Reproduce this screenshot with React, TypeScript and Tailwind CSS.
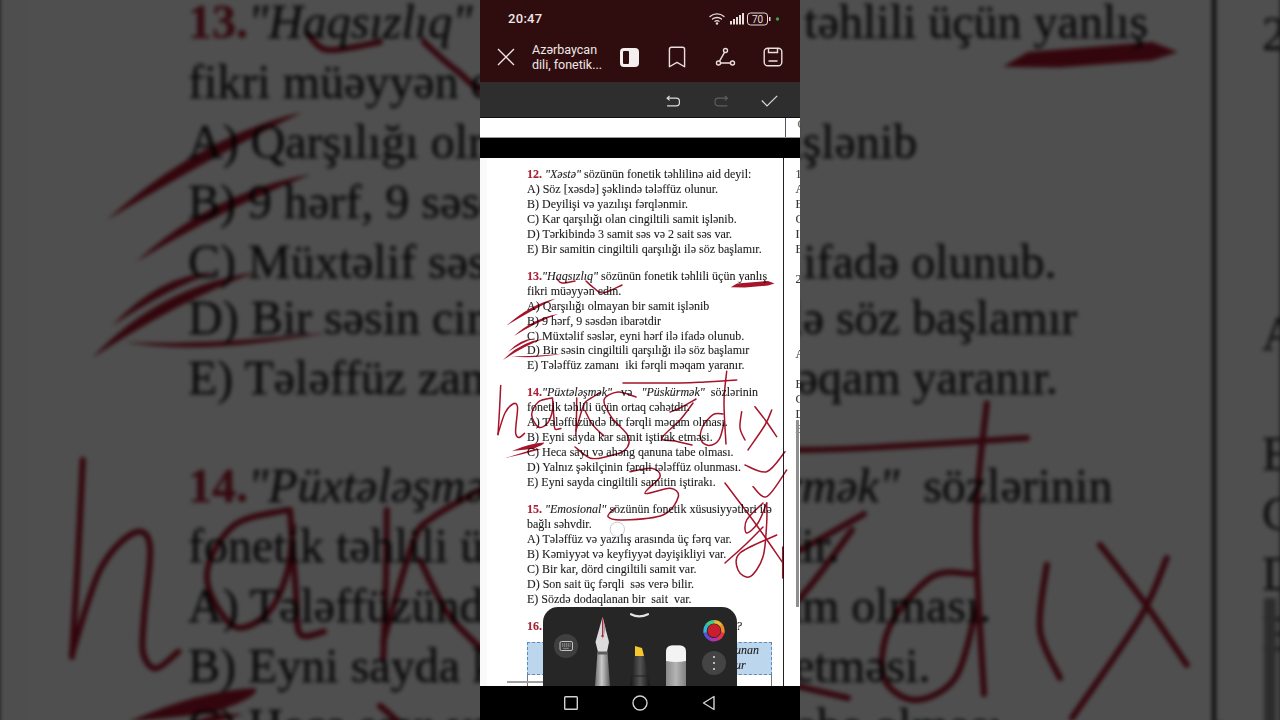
import { Bookmark } from "lucide-react";

type Pt = [number, number];

type Question = {
  num: string;
  head: string;
  mid?: string;
  head2?: string;
  rest: string;
  lines: string[];
};

const questions: Question[] = [
  {
    num: "12.",
    head: ' "Xəstə"',
    rest: " sözünün fonetik təhlilinə aid deyil:",
    lines: [
      "A) Söz [xəsdə] şəklində tələffüz olunur.",
      "B) Deyilişi və yazılışı fərqlənmir.",
      "C) Kar qarşılığı olan cingiltili samit işlənib.",
      "D) Tərkibində 3 samit səs və 2 sait səs var.",
      "E) Bir samitin cingiltili qarşılığı ilə söz başlamır.",
    ],
  },
  {
    num: "13.",
    head: '"Haqsızlıq"',
    rest: " sözünün fonetik təhlili üçün yanlış",
    lines: [
      "fikri müəyyən edin.",
      "A) Qarşılığı olmayan bir samit işlənib",
      "B) 9 hərf, 9 səsdən ibarətdir",
      "C) Müxtəlif səslər, eyni hərf ilə ifadə olunub.",
      "D) Bir səsin cingiltili qarşılığı ilə söz başlamır",
      "E) Tələffüz zamanı  iki fərqli məqam yaranır.",
    ],
  },
  {
    num: "14.",
    head: '"Püxtələşmək"',
    mid: "   və   ",
    head2: '"Püskürmək"',
    rest: "  sözlərinin",
    lines: [
      "fonetik təhlili üçün ortaq cəhətdir.",
      "A) Tələffüzündə bir fərqli məqam olması.",
      "B) Eyni sayda kar samit iştirak etməsi.",
      "C) Heca sayı və ahəng qanuna tabe olması.",
      "D) Yalnız şəkilçinin fərqli tələffüz olunması.",
      "E) Eyni sayda cingiltili samitin iştirakı.",
    ],
  },
  {
    num: "15.",
    head: ' "Emosional"',
    rest: " sözünün fonetik xüsusiyyətləri ilə",
    lines: [
      "bağlı səhvdir.",
      "A) Tələffüz və yazılış arasında üç fərq var.",
      "B) Kəmiyyət və keyfiyyət dəyişikliyi var.",
      "C) Bir kar, dörd cingiltili samit var.",
      "D) Son sait üç fərqli  səs verə bilir.",
      "E) Sözdə dodaqlanan bir  sait  var.",
    ],
  },
];

// second page column, only its first letters show
const nextColumn = ["1", "A", "E", "C", "I", "E", "", "2", "", "", "", "", "A", "", "E", "C", "D", "E"];

// catmull-rom through the points, good enough for handwriting
function smooth(pts: Pt[]) {
  let d = `M${pts[0][0]} ${pts[0][1]}`;
  for (let i = 0; i < pts.length - 1; i++) {
    const p0 = pts[i - 1] ?? pts[i];
    const p1 = pts[i];
    const p2 = pts[i + 1];
    const p3 = pts[i + 2] ?? p2;
    const c1x = p1[0] + (p2[0] - p0[0]) / 6;
    const c1y = p1[1] + (p2[1] - p0[1]) / 6;
    const c2x = p2[0] - (p3[0] - p1[0]) / 6;
    const c2y = p2[1] - (p3[1] - p1[1]) / 6;
    d += ` C${c1x} ${c1y} ${c2x} ${c2y} ${p2[0]} ${p2[1]}`;
  }
  return d;
}

const strokes: Pt[][] = [
  // underline + tick on line 13
  [[557, 279], [562, 283], [575, 281]],
  [[586, 281], [594, 288], [603, 293], [622, 285]],
  // h
  [[500.7, 385.5], [499.5, 410], [498, 434.7]],
  [[498, 434], [505, 413], [513.3, 403.8], [517.5, 407], [516, 425], [515.8, 433.8], [519, 437.6], [524.6, 433.4]],
  // a
  [[551.7, 398], [538.3, 402], [531.7, 414.7], [538.3, 427], [546.7, 424], [551.7, 414], [553.3, 402]],
  [[552.5, 398], [554, 419], [555, 429], [561, 428.4]],
  // k
  [[576.7, 398], [576.5, 415], [575.8, 435.5]],
  [[575.8, 431], [583.3, 406], [588, 400], [600, 393]],
  [[585, 410.5], [592.5, 424.6], [604, 436]],
  // s
  [[636, 397], [618, 392], [604, 400], [612, 418], [628, 436], [625, 450], [605, 457], [590, 458], [575, 447]],
  // top bar
  [[623, 383], [680, 383], [705, 382], [736.7, 380]],
  // z
  [[670, 412], [680, 408], [696, 399]],
  [[693, 403], [680, 420], [662, 438], [675, 441], [692, 445]],
  // d
  [[726.7, 371.3], [724, 402], [726, 444]],
  [[723, 414], [713, 414.7], [702.5, 427], [701, 440], [709, 445.5], [719, 439.7], [724, 423]],
  // i
  [[741.7, 411.7], [740, 428], [745, 440]],
  // x
  [[755, 406.7], [766, 421], [776.7, 436.7]],
  [[771.7, 410], [765, 425], [748, 450]],
  // 3
  [[630, 471.7], [651.7, 468.3], [660, 476.7], [645, 493.3], [670, 488.3], [678.3, 496.7], [663, 515], [623, 520], [608, 516.7], [615, 508]],
  // scribble bottom right
  [[745, 465], [766.7, 471.7], [785, 451.7]],
  [[786.7, 470], [766.7, 496.7], [753, 486.7]],
  [[725, 483], [755, 523], [783, 563]],
  [[763, 503], [746.7, 520], [746.7, 533], [758, 523], [766.7, 503]],
  [[766.7, 503], [766.7, 523], [763, 556.7], [750, 576.7], [738, 570], [740, 553], [776.7, 535]],
  [[725, 563], [745, 545], [763, 527]],
  [[782.7, 547], [782.7, 578]],
];

function Ink() {
  return (
    <svg className="absolute left-[-7px] top-0 h-[528px] w-[320px] mix-blend-multiply" viewBox="480 158 320 528" fill="none">
      <g stroke="#a5142a" strokeWidth="1.5" strokeLinecap="round" strokeLinejoin="round">
        {strokes.map((s, i) => (
          <path key={i} d={smooth(s)} />
        ))}
      </g>
      <g fill="#a5142a">
        <path d="M730.7 287.2 L737 283.5 L768 281 L774.5 283.5 L768 285.6 L745 287.4 Z" />
        <path d="M506.7 325.5 Q530 304.5 555.7 298.5 Q533 309.5 506.7 325.5 Z" />
        <path d="M514 336 Q533 318.5 558 314 Q535 323 514 336 Z" />
        <path d="M508 352 Q520 339 534 338.5 Q522 342.5 508 352 Z" />
        <path d="M503 360 Q520 342 544 338.5 Q524 346 503 360 Z" />
        <path d="M511 356 Q530 359.5 563 353.5 Q530 357 511 356 Z" />
        <path d="M505 458 L536 448.5 L512 451 Q530 443 544 442.5 Q545 445 532 449 L541 449 Q525 454 505 458 Z" />
      </g>
      <circle cx="617.3" cy="529.3" r="7.2" stroke="#c3ccd4" strokeWidth="1" />
    </svg>
  );
}

function Sheet() {
  return (
    <div className="relative flex h-[528px] w-[320px] overflow-hidden border-l-[7px] border-[#fafafa] bg-white font-['Liberation_Serif',serif] text-[12px] leading-[14.95px] text-[#1c1c1c] [-webkit-text-stroke:0.1px]">
      <div className="w-[297px] shrink-0 border-r-[1.5px] border-[#222] pl-[40px] pt-[9px]">
        {questions.map((q) => (
          <div key={q.num} className="mb-[12px] whitespace-pre">
            <div>
              <b className="text-[#a92335]">{q.num}</b>
              <span className="italic">{q.head}</span>
              {q.mid}
              {q.head2 && <span className="italic">{q.head2}</span>}
              {q.rest}
            </div>
            {q.lines.map((l) => (
              <div key={l}>{l}</div>
            ))}
          </div>
        ))}
        <div className="flex w-[245px] justify-between whitespace-pre pr-[30px]">
          <b className="text-[#a92335]">16.</b>
          <span className="italic">?</span>
        </div>
        <div className="mt-[8px] flex h-[33px] w-[245px] flex-col items-end justify-center border border-dashed border-[#5c8cba] bg-[#bcd6ee] pr-[10px] italic">
          <span className="w-[26px]">unan</span>
          <span className="w-[26px]">ur</span>
        </div>
        <div className="h-[12px] w-[245px] border-x border-[#777]" />
      </div>
      <div className="overflow-hidden whitespace-pre pl-[11.5px] pt-[9px] text-[#333]">
        {nextColumn.map((c, i) => (
          <div key={i} className="h-[15px]">
            {c}
          </div>
        ))}
      </div>
      <div className="absolute left-[309px] top-[262px] h-[187px] w-[3px] bg-[#8f8f8f]" />
      <div className="absolute left-[20px] top-[523px] h-[1.5px] w-[36px] bg-[#a0a0a0]" />
      <Ink />
    </div>
  );
}

function StatusIcons() {
  return (
    <svg width="76" height="14" viewBox="0 0 76 14" fill="none">
      <g stroke="#e6dcdc" strokeWidth="1.3" strokeLinecap="round">
        <path d="M1 4.5C5 1 11 1 15 4.5" />
        <path d="M3.5 7C6 5 10 5 12.5 7" />
        <path d="M6 9.3C7.2 8.4 8.8 8.4 10 9.3" />
      </g>
      <circle cx="8" cy="11.5" r="1.2" fill="#e6dcdc" />
      <g fill="#e6dcdc">
        <rect x="21" y="9" width="2" height="3.5" />
        <rect x="24" y="7" width="2" height="5.5" />
        <rect x="27" y="5" width="2" height="7.5" />
        <rect x="30" y="3" width="2" height="9.5" />
        <rect x="33" y="1" width="2" height="11.5" />
      </g>
      <rect x="38.5" y="1" width="20" height="12" rx="3" stroke="#e6dcdc" strokeWidth="1" />
      <rect x="60" y="5" width="1.5" height="4" fill="#e6dcdc" />
      <text x="48.5" y="10.6" textAnchor="middle" fontSize="10" fontFamily="Roboto, sans-serif" fill="#e6dcdc">
        70
      </text>
      <circle cx="68.5" cy="7" r="1.7" fill="#2fa84f" />
    </svg>
  );
}

function HeaderIcons() {
  return (
    <div className="ml-auto flex pr-[3px] text-[#eadede]">
      <div className="flex w-12 items-center justify-center">
        <div className="flex h-[19px] w-[19px] rounded-[4px] bg-[#f4eeee] p-[3px]">
          <div className="w-[6px] rounded-[1px] bg-[#2f0d0e]" />
        </div>
      </div>
      <div className="flex w-12 items-center justify-center">
        <Bookmark className="h-[26px] w-[26px]" strokeWidth={1.3} />
      </div>
      <div className="flex w-12 items-center justify-center">
        <svg width="22" height="22" viewBox="0 0 22 22" fill="none" stroke="currentColor" strokeWidth="1.4">
          <circle cx="11.5" cy="4.5" r="2" />
          <circle cx="4.5" cy="17" r="2" />
          <circle cx="18.5" cy="17" r="2" />
          <path d="M10.5 6.3L5.5 15.2M6.5 17H16.5" />
        </svg>
      </div>
      <div className="flex w-12 items-center justify-center">
        <svg width="20" height="20" viewBox="0 0 20 20" fill="none" stroke="currentColor" strokeWidth="1.4">
          <rect x="1.2" y="1.2" width="17.6" height="17.6" rx="3.5" />
          <path d="M5.5 1.5V5.5H14.5V1.5M5.5 14H14.5" />
        </svg>
      </div>
    </div>
  );
}

function UndoIcon({ flip }: { flip?: boolean }) {
  return (
    <svg width="14.5" height="12" viewBox="0 0 16 13" fill="none" stroke="currentColor" strokeWidth="1.3" className={flip ? "-scale-x-100" : ""}>
      <path d="M4 0.8L1.2 3.4L4 5.8M1.4 3.4H11.5C16 3.4 16 11.8 11.5 11.8H1.2" />
    </svg>
  );
}

function PenTray() {
  const ring = ["#e8b92f", "#f08a2c", "#e0344f", "#b62fb0", "#5a4fd8", "#2fb7d8", "#3fc98c"];
  return (
    <div className="absolute bottom-0 left-[63px] h-[79px] w-[194px] overflow-hidden rounded-t-[15px] bg-[#262626]">
      <svg width="194" height="79" viewBox="543 607 194 79" fill="none">
        <defs>
          <linearGradient id="steel" x1="0" x2="1" y1="0" y2="0">
            <stop offset="0" stopColor="#6f6f6f" />
            <stop offset="0.45" stopColor="#c9c9c9" />
            <stop offset="1" stopColor="#5c5c5c" />
          </linearGradient>
          <linearGradient id="black" x1="0" x2="1" y1="0" y2="0">
            <stop offset="0" stopColor="#161616" />
            <stop offset="0.5" stopColor="#555" />
            <stop offset="1" stopColor="#151515" />
          </linearGradient>
          <linearGradient id="eraser" x1="0" x2="1" y1="0" y2="0">
            <stop offset="0" stopColor="#8a8a8a" />
            <stop offset="0.5" stopColor="#b5b5b5" />
            <stop offset="1" stopColor="#808080" />
          </linearGradient>
        </defs>
        <path d="M631 614.2Q639 618.5 648 614.2" stroke="#e4e4e4" strokeWidth="2.2" strokeLinecap="round" />
        {/* keyboard */}
        <circle cx="566" cy="646" r="12" fill="#3f3f3f" />
        <rect x="560" y="641.5" width="12.5" height="9" rx="1.5" stroke="#c4c4c4" strokeWidth="1" />
        <path d="M562 644H570.5M562 646H570.5M563.5 648.4H569" stroke="#c4c4c4" strokeWidth="0.9" strokeDasharray="1.2 0.7" />
        {/* pen */}
        <path d="M602.5 617L609 642L607 652H598L595.5 642Z" fill="#dcdcdc" />
        <path d="M602.5 617L605.5 630L602.5 640Z" fill="#a8a8a8" />
        <path d="M602.5 618V636" stroke="#c41f3a" strokeWidth="1" />
        <path d="M602.5 618L605 628" stroke="#c98a90" strokeWidth="0.8" />
        <circle cx="602.5" cy="636" r="1.2" fill="#c41f3a" />
        <path d="M597.5 652H607.5L610 686H595Z" fill="url(#steel)" />
        <rect x="597.5" y="651.5" width="10" height="3" fill="#5d5d5d" />
        {/* highlighter */}
        <path d="M635 646L642 648L644 656H635Z" fill="#f5c92e" />
        <path d="M634.5 656H644L650 686H630Z" fill="url(#black)" />
        <path d="M630.5 676H649" stroke="#222" strokeWidth="1" />
        {/* eraser */}
        <path d="M666 652Q666 645.5 672 645.5H680Q686 645.5 686 652V686H666Z" fill="url(#eraser)" />
        <path d="M666 661V652Q666 645.5 672 645.5H680Q686 645.5 686 652V661Q676 663 666 661Z" fill="#f3f3f3" />
        {/* colour ring */}
        {ring.map((c, i) => (
          <circle
            key={c}
            cx="714"
            cy="630.7"
            r="9"
            stroke={c}
            strokeWidth="3.4"
            pathLength={70}
            strokeDasharray="10.5 59.5"
            strokeDashoffset={-i * 10}
            transform="rotate(-90 714 630.7)"
          />
        ))}
        <circle cx="714" cy="630.7" r="6.6" fill="#c81e2e" />
        {/* more */}
        <circle cx="714" cy="663" r="12" fill="#444" />
        <g fill="#d8d8d8">
          <circle cx="714" cy="657" r="1.1" />
          <circle cx="714" cy="663" r="1.1" />
          <circle cx="714" cy="669" r="1.1" />
        </g>
      </svg>
    </div>
  );
}

export default function App() {
  return (
    <div className="relative flex h-[720px] w-[1280px] justify-center overflow-hidden bg-[#505050] font-['Roboto',sans-serif]">
      {/* blurred, darkened copy of the page behind the phone */}
      <div className="absolute inset-0 overflow-hidden">
        <div className="absolute left-0 top-[-450px] origin-top-left scale-[4] blur-[0.55px]">
          <Sheet />
        </div>
        <div className="absolute inset-0 bg-black/[0.69]" />
      </div>

      <div className="relative flex h-[720px] w-[320px] flex-col bg-black">
        <div className="h-[82px] bg-[#2f0d0e] text-[#efe6e6]">
          <div className="flex h-[38px] items-center justify-between pl-[28px] pr-[15px]">
            <span className="text-[13px] font-medium tracking-[0.3px]">20:47</span>
            <StatusIcons />
          </div>
          <div className="flex h-[38px] items-center">
            <div className="flex w-[52px] items-center justify-center">
              <svg width="18" height="18" viewBox="0 0 18 18" stroke="currentColor" strokeWidth="1.3">
                <path d="M1 1L17 17M17 1L1 17" />
              </svg>
            </div>
            <div className="text-[12.5px] leading-[15px]">
              Azərbaycan
              <br />
              dili, fonetik...
            </div>
            <HeaderIcons />
          </div>
        </div>

        <div className="flex h-[35px] items-center justify-end bg-[#2e2e2e] pr-[7px] pt-[3px] text-[#dcdcdc]">
          <div className="flex w-12 justify-center">
            <UndoIcon />
          </div>
          <div className="flex w-12 justify-center text-[#5f5f5f]">
            <UndoIcon flip />
          </div>
          <div className="flex w-12 justify-center">
            <svg width="17" height="12" viewBox="0 0 17 12" fill="none" stroke="currentColor" strokeWidth="1.2">
              <path d="M0.8 5.5L6 11L16.2 0.8" />
            </svg>
          </div>
        </div>

        <div className="flex h-[21px] border-b border-t border-b-[#999] border-t-[#111] bg-white">
          <div className="w-[305.5px] shrink-0 border-r-[1.5px] border-[#555]" />
          <span className="overflow-hidden pl-[12px] font-['Liberation_Serif',serif] text-[12px] leading-[13px] text-[#555]">C</span>
        </div>
        <div className="h-[20px] bg-black" />

        <div className="relative h-[528px] overflow-hidden blur-[0.25px]">
          <Sheet />
          <PenTray />
        </div>

        <div className="flex h-[34px] items-center justify-center gap-[53px] bg-black">
          <svg width="16" height="16" viewBox="0 0 16 16" fill="none" stroke="#d2d2d2" strokeWidth="1.4">
            <rect x="1.7" y="1.7" width="12.6" height="12.6" rx="0.8" />
          </svg>
          <svg width="16" height="16" viewBox="0 0 16 16" fill="none" stroke="#d2d2d2" strokeWidth="1.4">
            <circle cx="8" cy="8" r="7" />
          </svg>
          <svg width="16" height="16" viewBox="0 0 16 16" fill="none" stroke="#d2d2d2" strokeWidth="1.4" strokeLinejoin="round">
            <path d="M13 1.5V14.5L2.5 8Z" />
          </svg>
        </div>
      </div>
    </div>
  );
}
